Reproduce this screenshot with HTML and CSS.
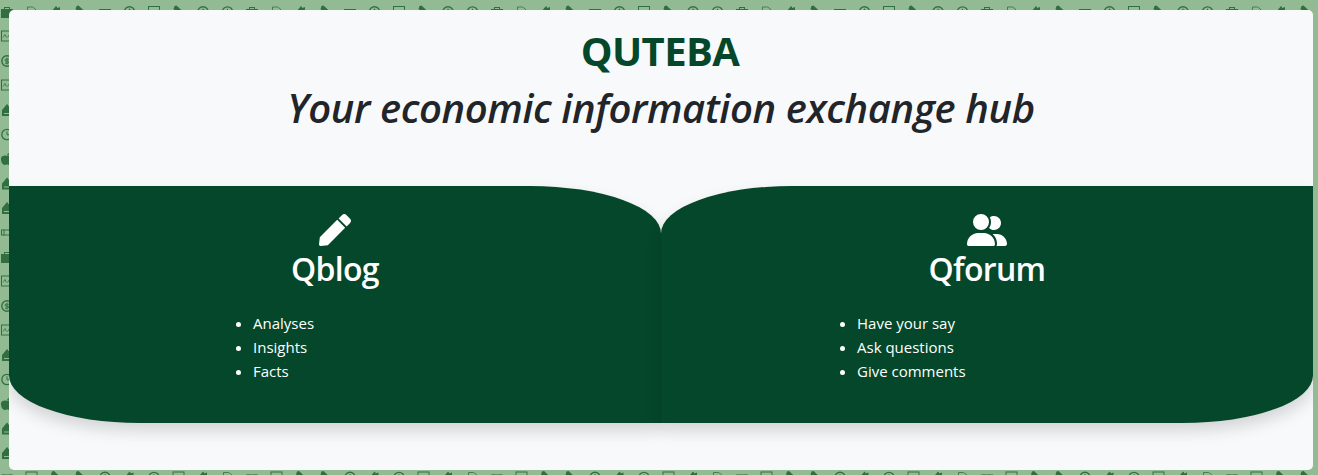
FILE: index.html
```html
<!DOCTYPE html>
<html lang="en">
<head>
    <meta charset="UTF-8">
    <meta name="viewport" content="width=device-width, initial-scale=1.0">
    <title>QUTEBA</title>
    <link rel="stylesheet" href="styles.css">
</head>
<body>
    <div class="card">
        <div class="intro">
            <h1>QUTEBA</h1>
            <p class="tagline">Your economic information exchange hub</p>
        </div>

        <div class="sections">
            <div class="section section-blog">
                <svg class="section-icon" viewBox="0 0 512 512" width="32" height="32" aria-hidden="true">
                    <path d="M290.74 93.24l128.02 128.02-277.99 277.99-114.14 12.6C11.35 513.54-1.56 500.62.14 485.34l12.7-114.22 277.9-278.88zm207.2-19.06l-60.11-60.11c-18.75-18.75-49.16-18.75-67.91 0l-56.55 56.55 128.02 128.02 56.55-56.55c18.75-18.76 18.75-49.16 0-67.91z"/>
                </svg>
                <h2>Qblog</h2>
                <ul>
                    <li>Analyses</li>
                    <li>Insights</li>
                    <li>Facts</li>
                </ul>
            </div>

            <div class="section section-forum">
                <svg class="section-icon" viewBox="0 0 640 512" width="40" height="32" aria-hidden="true">
                    <path d="M96 128a128 128 0 1 1 256 0A128 128 0 1 1 96 128zM0 482.3C0 383.8 79.8 304 178.3 304h91.4C368.2 304 448 383.8 448 482.3c0 16.4-13.3 29.7-29.7 29.7H29.7C13.3 512 0 498.7 0 482.3zM609.3 512H471.4c5.4-9.4 8.6-20.3 8.6-32v-8c0-60.7-27.1-115.2-69.8-151.8c2.4-.1 4.700-.2 7.100-.2h61.400C567.800 320 640 392.200 640 481.300c0 17-13.800 30.700-30.700 30.700zM432 256c-31 0-59-12.600-79.300-32.900C372.400 196.500 384 163.600 384 128c0-26.800-6.600-52.100-18.300-74.300C384.300 40.100 407.200 32 432 32c61.900 0 112 50.100 112 112s-50.100 112-112 112z"/>
                </svg>
                <h2>Qforum</h2>
                <ul>
                    <li>Have your say</li>
                    <li>Ask questions</li>
                    <li>Give comments</li>
                </ul>
            </div>
        </div>
    </div>
</body>
</html>
```
FILE: styles.css
```css
* {
    box-sizing: border-box;
}
html, body {
    height: 100%;
}
body {
    margin: 0;
    padding: 10px 5px 5px 9px;
    overflow: hidden;
    font-family: 'Open Sans', 'Noto Sans', sans-serif;
    color: #212529;
    background-color: #93bb93;
    /* icon wallpaper: 10 x 10 tile at 24.5px, only the cells that show round the card are drawn */
    background-image: url("data:image/svg+xml,%3Csvg xmlns='http://www.w3.org/2000/svg' width='245' height='245' fill='%23326f40' stroke='%23326f40'%3E%3Cdefs%3E%3Cg id='br' stroke='none'%3E%3Cpath d='M0 3h3V1h6v2h3v9H0zM4 2v1h4V2z' fill-rule='evenodd'/%3E%3C/g%3E%3Cg id='fo' fill='none' stroke-width='.8'%3E%3Cpath d='M2 1h5l3 2v8H2z'/%3E%3C/g%3E%3Cg id='bk' stroke='none'%3E%3Cpath d='M1 12V6l5-6 1 1v1l3-1v8H3v1h8v2z'/%3E%3C/g%3E%3Cg id='pn' stroke='none'%3E%3Cpath d='M2 0l2-.5 8 7.500v4H9L1 3z'/%3E%3C/g%3E%3Cg id='ti' fill='none'%3E%3Crect x='.5' y='3.500' width='11' height='5'/%3E%3Cpath d='M3 3v6M9 3v6'/%3E%3C/g%3E%3Cg id='do' fill='none' stroke-width='1.400'%3E%3Ccircle cx='6' cy='6' r='5.200'/%3E%3Cpath d='M8 4.200H5a1 1 0 0 0 0 2h2a1 1 0 0 1 0 2H4M6 2.600v6.800' stroke-width='1'/%3E%3C/g%3E%3Cg id='ch' fill='none'%3E%3Crect x='.5' y='.5' width='11' height='10'/%3E%3Cpath d='M2 7l2-3 1.500 3M6.500 7l2-3 1.500 3' stroke-width='.8'/%3E%3C/g%3E%3Cg id='cl' fill='none' stroke-width='1.300'%3E%3Ccircle cx='6' cy='6' r='5.200'/%3E%3Cpath d='M6 2.800V6.300h2.800' stroke-width='1'/%3E%3C/g%3E%3Cg id='ap' stroke='none'%3E%3Cpath d='M6 3C8 2 11 2.500 12 5c.5 3-1.500 7-3.500 7-1 0-1.500-.5-2.500-.5S4.500 12 3.500 12C1.500 12-.5 8 0 5c1-2.500 4-3 6-2z'/%3E%3Cpath d='M6 2.500C6 1 7 0 8.500 0c0 1.500-1 2.500-2.500 2.500z'/%3E%3C/g%3E%3C/defs%3E%3Cg transform='translate(6 6)'%3E%3Cuse href='%23br'/%3E%3Cuse href='%23fo' x='24.500'/%3E%3Cuse href='%23bk' x='49'/%3E%3Cuse href='%23pn' x='73.500'/%3E%3Cuse href='%23ti' x='98'/%3E%3Cuse href='%23do' x='122.500'/%3E%3Cuse href='%23ch' x='147'/%3E%3Cuse href='%23pn' x='171.500'/%3E%3Cuse href='%23do' x='196'/%3E%3Cuse href='%23cl' x='220.500'/%3E%3Cuse href='%23ch' y='24.500'/%3E%3Cuse href='%23do' y='49'/%3E%3Cuse href='%23ch' y='73.500'/%3E%3Cuse href='%23bk' y='98'/%3E%3Cuse href='%23cl' y='122.500'/%3E%3Cuse href='%23ap' y='147'/%3E%3Cuse href='%23bk' y='171.500'/%3E%3Cuse href='%23bk' y='196'/%3E%3Cuse href='%23ti' y='220.500'/%3E%3Cuse href='%23ch' x='24.500' y='220.500'/%3E%3Cuse href='%23pn' x='49' y='220.500'/%3E%3Cuse href='%23pn' x='73.500' y='220.500'/%3E%3Cuse href='%23do' x='98' y='220.500'/%3E%3Cuse href='%23bk' x='122.500' y='220.500'/%3E%3Cuse href='%23cl' x='147' y='220.500'/%3E%3Cuse href='%23ch' x='171.500' y='220.500'/%3E%3Cuse href='%23bk' x='196' y='220.500'/%3E%3Cuse href='%23fo' x='220.500' y='220.500'/%3E%3C/g%3E%3C/svg%3E");
    background-position: -5px 0;
}
.card {
    height: 460px;
    background: #f8f9fa;
    border-radius: 5px;
    overflow: hidden;
}
.intro {
    height: 176px;
    padding-top: 17px;
    text-align: center;
}
h1 {
    margin: 0 0 9px;
    padding-right: 2px;
    font-size: 40px;
    line-height: 48px;
    font-weight: 700;
    letter-spacing: -0.6px;
    color: #05472a;
}
.tagline {
    margin: 0;
    font-size: 40px;
    line-height: 48px;
    font-style: italic;
    font-weight: 600;
    letter-spacing: -0.4px;
}
.sections {
    display: flex;
}
.section {
    flex: 1;
    height: 237px;
    padding-top: 28px;
    background: #05472a;
    color: white;
    box-shadow: 0 8px 16px rgba(0, 0, 0, 0.15);
}
.section-blog {
    border-radius: 0 20% 0 20%;
}
.section-forum {
    border-radius: 20% 0 20% 0;
}
.section-icon {
    display: block;
    margin: 0 auto;
    fill: white;
}
h2 {
    margin: 4px 0 23px;
    font-size: 32px;
    line-height: 38px;
    font-weight: 600;
    letter-spacing: -0.7px;
    text-align: center;
}
ul {
    margin: 0;
    padding-left: 40px;
    font-size: 15px;
    line-height: 24px;
}
.section-blog ul {
    margin-left: 204px;
}
.section-forum ul {
    margin-left: 156px;
}
```
